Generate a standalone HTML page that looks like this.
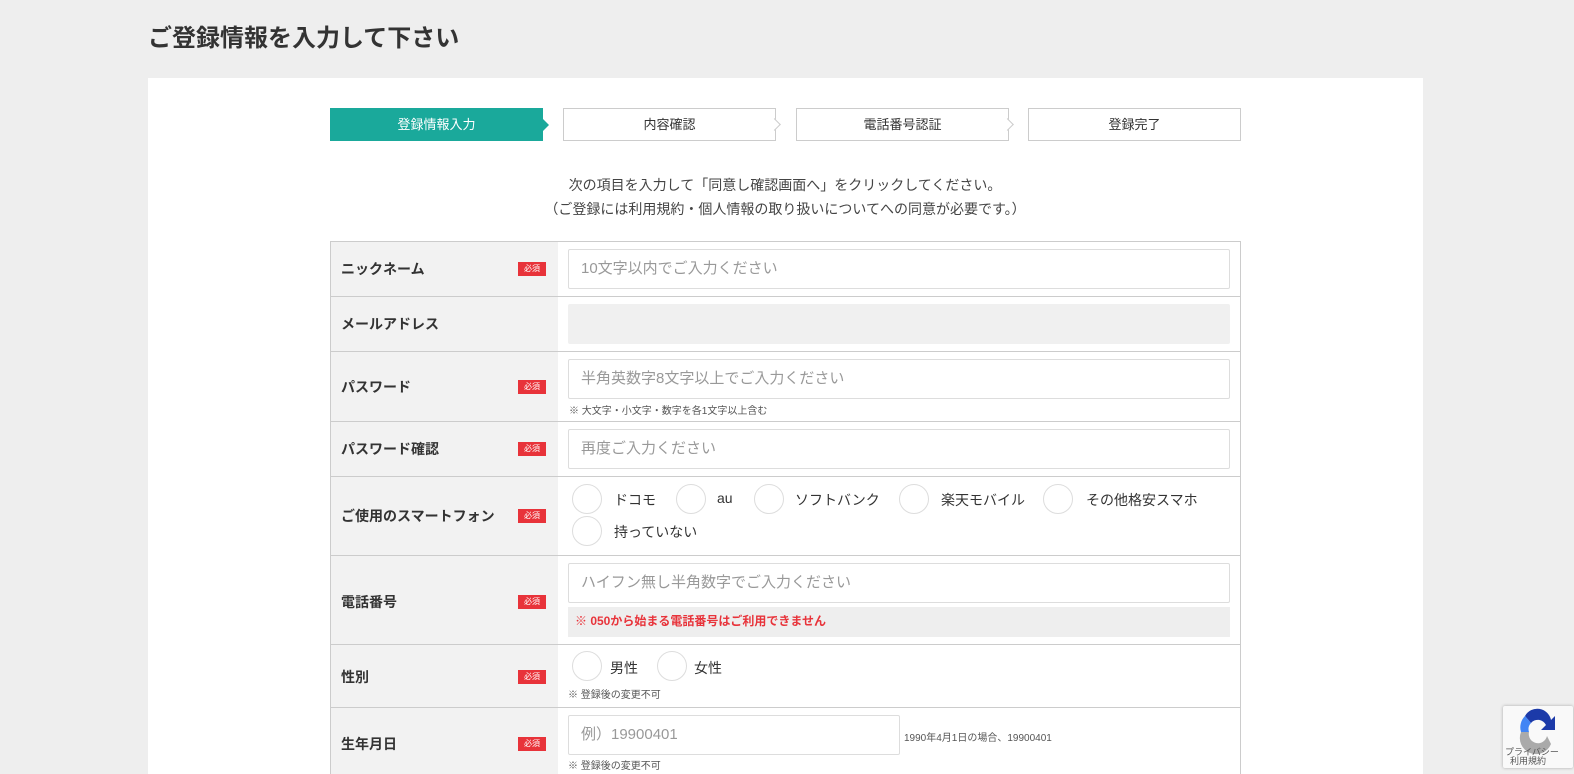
<!DOCTYPE html>
<html><head><meta charset="utf-8"><style>
*{box-sizing:border-box;margin:0;padding:0}
html,body{width:1574px;height:774px;overflow:hidden}
body{background:#eee;font-family:"Liberation Sans","Noto Sans CJK JP",sans-serif;color:#333;position:relative}
.a{position:absolute}
h1{position:absolute;left:148px;top:18px;font-size:24px;font-weight:bold;color:#333}
.card{left:148px;top:78px;width:1275px;height:720px;background:#fff}
.step{top:108px;height:33px;border:1px solid #ccc;background:#fff;font-size:13px;text-align:center;line-height:31px;color:#333}
.step.on{background:#1aa99b;border-color:#1aa99b;color:#fff}
.arr{top:119px;width:0;height:0;border-top:6px solid transparent;border-bottom:6px solid transparent}
.garr{top:120px;width:9px;height:9px;border-top:1px solid #ccc;border-right:1px solid #ccc;background:#fff;transform:rotate(45deg)}
.msg{left:330px;width:910px;text-align:center;font-size:14px;color:#444}
.tbl{left:330px;top:241px;width:911px;height:560px;border:1px solid #ccc;background:#fff}
.lab{left:331px;width:227px;background:#f2f2f2}
.line{left:330px;width:911px;height:1px;background:#ccc}
.lt{left:341px;font-size:14px;font-weight:bold;color:#333}
.req{left:518px;width:28px;height:14px;background:#e8333a;color:#fff;font-size:8px;text-align:center;line-height:14px}
.inp{left:568px;width:662px;height:40px;border:1px solid #ddd;border-radius:2px;background:#fff;font-size:15px;color:#999;padding-left:12px;line-height:38px}
.note{font-size:10px;color:#555}
.rad{width:30px;height:30px;border:1px solid #ddd;border-radius:50%;background:#fff}
.rl{font-size:14px;color:#333}
</style></head><body>
<h1>ご登録情報を入力して下さい</h1>
<div class="a card"></div>
<div class="a step on" style="left:330px;width:213px">登録情報入力</div>
<div class="a arr" style="left:543px;border-left:6px solid #1aa99b"></div>
<div class="a step" style="left:563px;width:213px">内容確認</div>
<div class="a garr" style="left:770px"></div>
<div class="a step" style="left:796px;width:213px">電話番号認証</div>
<div class="a garr" style="left:1003px"></div>
<div class="a step" style="left:1028px;width:213px">登録完了</div>
<div class="a msg" style="top:175px">次の項目を入力して「同意し確認画面へ」をクリックしてください。</div>
<div class="a msg" style="top:199px">（ご登録には利用規約・個人情報の取り扱いについてへの同意が必要です。）</div>
<div class="a tbl"></div>
<div class="a lab" style="top:242px;height:560px"></div>
<div class="a line" style="top:296px"></div>
<div class="a line" style="top:351px"></div>
<div class="a line" style="top:421px"></div>
<div class="a line" style="top:476px"></div>
<div class="a line" style="top:555px"></div>
<div class="a line" style="top:644px"></div>
<div class="a line" style="top:707px"></div>

<div class="a lt" style="top:259px">ニックネーム</div><div class="a req" style="top:262px">必須</div>
<div class="a inp" style="top:249px">10文字以内でご入力ください</div>

<div class="a lt" style="top:314px">メールアドレス</div>
<div class="a inp" style="top:304px;background:#f0f0f0;border-color:#f0f0f0"></div>

<div class="a lt" style="top:377px">パスワード</div><div class="a req" style="top:380px">必須</div>
<div class="a inp" style="top:359px">半角英数字8文字以上でご入力ください</div>
<div class="a note" style="left:569px;top:402px">※ 大文字・小文字・数字を各1文字以上含む</div>

<div class="a lt" style="top:439px">パスワード確認</div><div class="a req" style="top:442px">必須</div>
<div class="a inp" style="top:429px">再度ご入力ください</div>

<div class="a lt" style="top:506px">ご使用のスマートフォン</div><div class="a req" style="top:509px">必須</div>
<div class="a rad" style="left:572px;top:484px"></div><div class="a rl" style="left:614px;top:490px">ドコモ</div>
<div class="a rad" style="left:676px;top:484px"></div><div class="a rl" style="left:717px;top:490px">au</div>
<div class="a rad" style="left:754px;top:484px"></div><div class="a rl" style="left:795px;top:490px">ソフトバンク</div>
<div class="a rad" style="left:899px;top:484px"></div><div class="a rl" style="left:941px;top:490px">楽天モバイル</div>
<div class="a rad" style="left:1043px;top:484px"></div><div class="a rl" style="left:1086px;top:490px">その他格安スマホ</div>
<div class="a rad" style="left:572px;top:516px"></div><div class="a rl" style="left:614px;top:522px">持っていない</div>

<div class="a lt" style="top:592px">電話番号</div><div class="a req" style="top:595px">必須</div>
<div class="a inp" style="top:563px">ハイフン無し半角数字でご入力ください</div>
<div class="a" style="left:568px;top:607px;width:662px;height:30px;background:#eee;color:#e8333a;font-size:12px;font-weight:bold;line-height:28px;padding-left:7px">※ 050から始まる電話番号はご利用できません</div>

<div class="a lt" style="top:667px">性別</div><div class="a req" style="top:670px">必須</div>
<div class="a rad" style="left:572px;top:651px"></div><div class="a rl" style="left:610px;top:658px">男性</div>
<div class="a rad" style="left:657px;top:651px"></div><div class="a rl" style="left:694px;top:658px">女性</div>
<div class="a note" style="left:568px;top:686px">※ 登録後の変更不可</div>

<div class="a lt" style="top:734px">生年月日</div><div class="a req" style="top:737px">必須</div>
<div class="a inp" style="top:715px;width:332px">例）19900401</div>
<div class="a note" style="left:904px;top:729px">1990年4月1日の場合、19900401</div>
<div class="a note" style="left:568px;top:757px">※ 登録後の変更不可</div>

<div class="a" style="left:1503px;top:706px;width:70px;height:62px;background:#f9f9f9;box-shadow:0 0 3px #aaa;border-radius:2px">
<svg width="70" height="50" viewBox="0 0 70 50"><path d="M22 10 A14 14 0 0 1 48 14 L52 10 L52 24 L38 24 L43 19 A9 9 0 0 0 28 17Z" fill="#1c3aa9"/><path d="M22 10 L28 17 A9 9 0 0 0 26 26 L18 26 A16 16 0 0 1 22 10Z" fill="#4285f4"/><path d="M18 26 L26 26 A9 9 0 0 0 44 30 L48 38 A16 16 0 0 1 18 26Z" fill="#aaa"/></svg>
<div style="position:absolute;left:2px;top:42px;font-size:9px;color:#555;line-height:9px">プライバシー<br>&nbsp;&nbsp;利用規約</div></div>
</body></html>
